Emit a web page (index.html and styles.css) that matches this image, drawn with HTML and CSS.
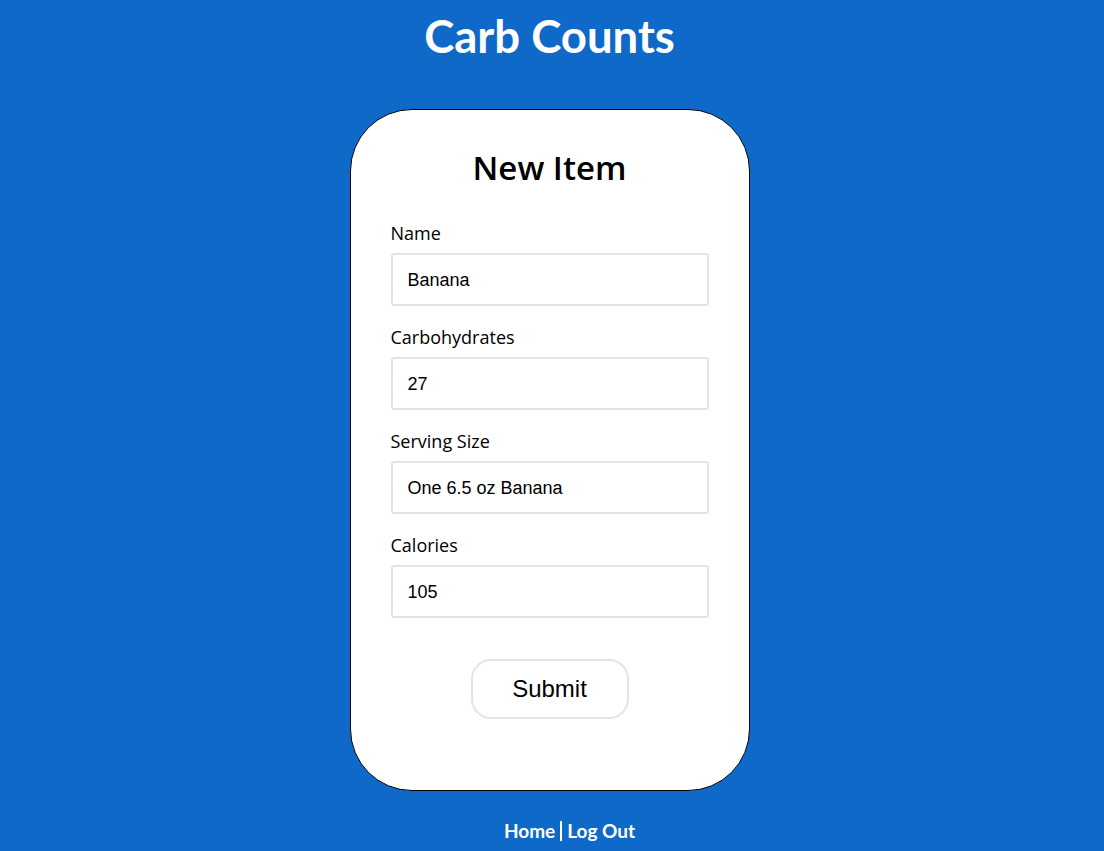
FILE: index.html
```html
<!DOCTYPE html>
<html lang="en">
<head>
<meta charset="utf-8">
<title>Carb Counts</title>
<link rel="stylesheet" href="styles.css">
</head>
<body>
  <h1 class="site-title">Carb Counts</h1>
  <form class="card">
    <h2 class="card-title">New Item</h2>
    <div class="field">
      <label class="field-label" for="name">Name</label>
      <input class="field-input" id="name" type="text" value="Banana">
    </div>
    <div class="field">
      <label class="field-label" for="carbs">Carbohydrates</label>
      <input class="field-input" id="carbs" type="text" value="27">
    </div>
    <div class="field">
      <label class="field-label" for="serving">Serving Size</label>
      <input class="field-input" id="serving" type="text" value="One 6.5 oz Banana">
    </div>
    <div class="field">
      <label class="field-label" for="calories">Calories</label>
      <input class="field-input" id="calories" type="text" value="105">
    </div>
    <button class="submit" type="button">Submit</button>
  </form>
  <nav class="footer-nav">
    <a class="nav-link" href="#">Home</a><span class="nav-sep"></span><a class="nav-link" href="#">Log Out</a>
  </nav>
</body>
</html>
```
FILE: styles.css
```css
html, body {
  margin: 0;
  padding: 0;
}
body {
  box-sizing: border-box;
  background: #0e69c9;
  min-height: 851px;
  padding-right: 5px;
  display: flex;
  flex-direction: column;
  align-items: center;
  font-family: "Open Sans", sans-serif;
}
.site-title {
  font-family: Lato, sans-serif;
  font-weight: 700;
  font-size: 45.5px;
  line-height: 56px;
  color: #fff;
  margin: 8px 0 45px;
}
.card {
  box-sizing: border-box;
  width: 400px;
  height: 682px;
  background: #fff;
  border: 1px solid #000;
  border-radius: 62px;
  padding: 35px 40px 0;
  display: flex;
  flex-direction: column;
  align-items: center;
}
.card-title {
  font-family: "Open Sans", sans-serif;
  font-weight: 600;
  font-size: 33px;
  line-height: 46px;
  color: #000;
  margin: 0 0 30px;
}
.field {
  width: 100%;
  display: flex;
  flex-direction: column;
  margin-bottom: 19px;
}
.field-label {
  font-size: 18px;
  line-height: 24px;
  color: #000;
  margin-bottom: 8px;
}
.field-input {
  box-sizing: border-box;
  width: 318px;
  height: 53px;
  border: 2px solid #e4e4e4;
  border-radius: 3px;
  padding: 1px 15px 0;
  font-family: "Liberation Sans", Arial, sans-serif;
  font-size: 18px;
  color: #000;
  background: #fff;
  outline: none;
}
.submit {
  margin-top: 22px;
  box-sizing: border-box;
  width: 158px;
  height: 60px;
  border: 2px solid #e4e4e4;
  border-radius: 20px;
  background: #fff;
  font-family: "Liberation Sans", Arial, sans-serif;
  font-size: 24px;
  color: #000;
  padding: 0;
}
.footer-nav {
  margin: 29px 0 0 40px;
  display: flex;
  align-items: center;
  font-family: Lato, sans-serif;
  font-weight: 700;
  font-size: 19px;
  line-height: 22px;
}
.nav-link {
  color: #fff;
  text-decoration: none;
}
.nav-sep {
  display: inline-block;
  width: 2px;
  height: 20px;
  background: #fff;
  margin: 0 5px 0 5px;
}
```
